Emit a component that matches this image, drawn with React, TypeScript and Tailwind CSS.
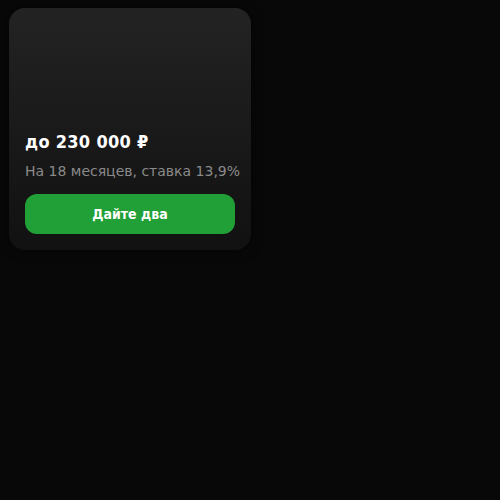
import React from 'react';

const App = () => {
  return (
    <div className="min-h-[500px] w-[500px] bg-[#080808] pt-2 pl-[9px] font-['DejaVu_Sans',sans-serif]">
      <div className="w-[242px] h-[242px] rounded-2xl bg-gradient-to-b from-[#232323] to-[#111111] shadow-[0_0_12px_rgba(0,0,0,0.6)] flex flex-col justify-end p-4">
        <h2 className="text-[18px] leading-6 font-bold text-white tracking-[0.3px] font-['DejaVu_Sans_Condensed','DejaVu_Sans',sans-serif]">
          до 230 000 ₽
        </h2>
        <p className="mt-[7px] text-[14px] leading-5 text-[#8a8a8a] whitespace-nowrap">На 18 месяцев, ставка 13,9%</p>
        <button className="mt-[13px] h-10 w-full rounded-xl bg-[#21a038] text-white text-[14px] font-bold font-['DejaVu_Sans_Condensed','DejaVu_Sans',sans-serif]">
          Дайте два
        </button>
      </div>
    </div>
  );
};

export default App;
